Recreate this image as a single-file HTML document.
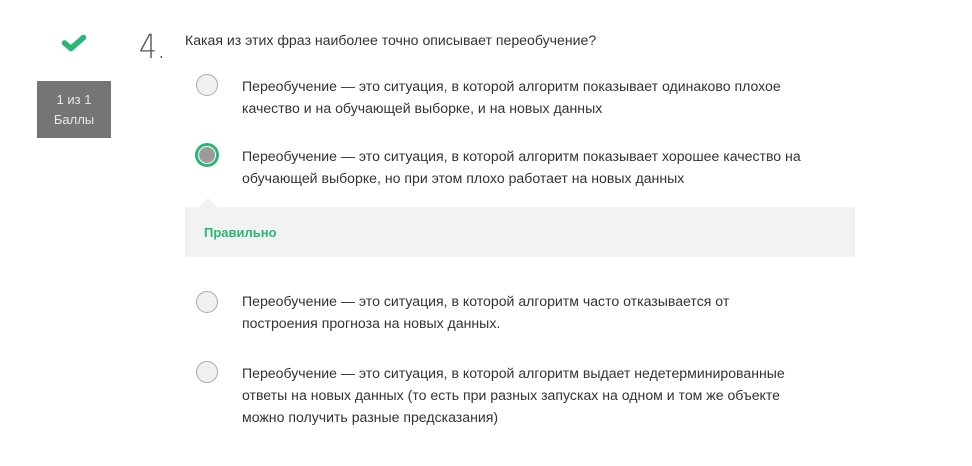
<!DOCTYPE html>
<html><head><meta charset="utf-8"><style>
body{margin:0;width:972px;height:466px;background:#fff;font-family:"Liberation Sans",Arial,sans-serif;color:#333;position:relative;overflow:hidden}
.a{position:absolute}
.radio{position:absolute;left:196px;width:20px;height:20px;border:1px solid #aaa;border-radius:50%;background:#f0f0f0}
.t{position:absolute;left:242px;font-size:14.1px;line-height:22px;color:#333;width:620px}
</style></head><body>
<svg class="a" style="left:61px;top:34px" width="26" height="18" viewBox="0 0 26 18"><path d="M3.5 9 L10 14.5 L22.5 3.5" stroke="#2bb673" stroke-width="5.5" fill="none" stroke-linecap="round" stroke-linejoin="round"/></svg>
<div class="a" style="left:37px;top:81px;width:74px;height:57px;background:#757575;color:#e8e8e8;font-size:13px;line-height:20px;text-align:center;padding-top:9px;box-sizing:border-box">1 из 1<br>Баллы</div>
<div class="a" style="left:139px;top:27px;font-size:33px;color:#555;font-family:'DejaVu Sans','Liberation Sans',sans-serif;font-weight:200;transform:scaleX(0.85);transform-origin:left">4.</div>
<div class="a" style="left:185px;top:32px;font-size:14.1px;color:#333">Какая из этих фраз наиболее точно описывает переобучение?</div>

<div class="radio" style="top:74px"></div>
<div class="t" style="top:75px">Переобучение — это ситуация, в которой алгоритм показывает одинаково плохое<br>качество и на обучающей выборке, и на новых данных</div>

<div class="a" style="left:195px;top:143px;width:18px;height:18px;border:3px solid #2bb673;border-radius:50%;background:#fff"></div>
<div class="a" style="left:199px;top:147px;width:16px;height:16px;border-radius:50%;background:#9b9b9b"></div>
<div class="t" style="top:145px">Переобучение — это ситуация, в которой алгоритм показывает хорошее качество на<br>обучающей выборке, но при этом плохо работает на новых данных</div>

<div class="a" style="left:199px;top:198px;width:0;height:0;border-left:9px solid transparent;border-right:9px solid transparent;border-bottom:9px solid #f2f2f2"></div>
<div class="a" style="left:185px;top:207px;width:670px;height:50px;background:#f2f2f2"></div>
<div class="a" style="left:204px;top:225px;font-size:13px;font-weight:bold;color:#2bb673">Правильно</div>

<div class="radio" style="top:291px"></div>
<div class="t" style="top:290px">Переобучение — это ситуация, в которой алгоритм часто отказывается от<br>построения прогноза на новых данных.</div>

<div class="radio" style="top:361px"></div>
<div class="t" style="top:362px">Переобучение — это ситуация, в которой алгоритм выдает недетерминированные<br>ответы на новых данных (то есть при разных запусках на одном и том же объекте<br>можно получить разные предсказания)</div>
</body></html>
